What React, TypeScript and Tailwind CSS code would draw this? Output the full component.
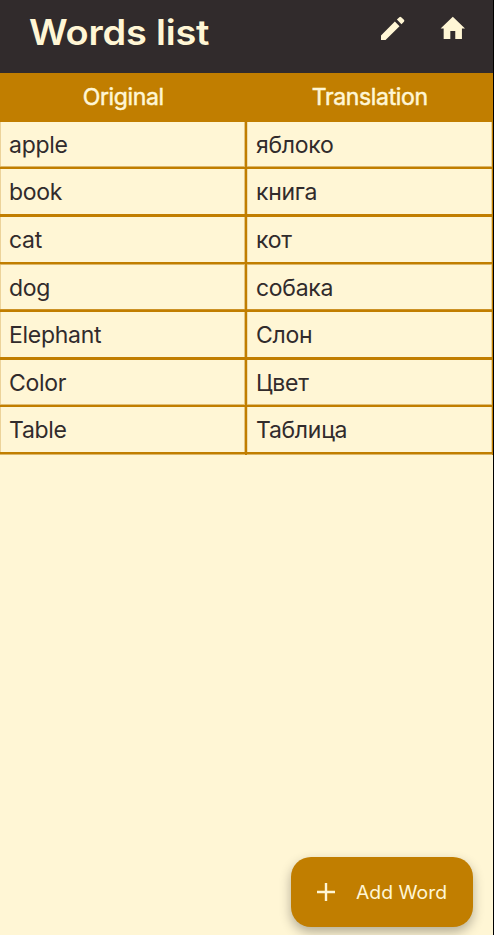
const words = [
  { original: "apple", translation: "яблоко", height: "h-[44px]", line: "border-t-[#dcb769]", end: "border-b-[#c17e00]" },
  { original: "book", translation: "книга", height: "h-[45px]", line: "border-t-[#c17e00]", end: "border-b-[#c17e00]" },
  { original: "cat", translation: "кот", height: "h-[45px]", line: "border-t-[#c17e00]", end: "border-b-[#dcb769]" },
  { original: "dog", translation: "собака", height: "h-[44px]", line: "border-t-[#cc9226]", end: "border-b-[#c17e00]" },
  { original: "Elephant", translation: "Слон", height: "h-[45px]", line: "border-t-[#c17e00]", end: "border-b-[#c17e00]" },
  { original: "Color", translation: "Цвет", height: "h-[44px]", line: "border-t-[#e0be75]", end: "border-b-[#c17e00]" },
  { original: "Table", translation: "Таблица", height: "h-[45px]", line: "border-t-[#c17e00]", end: "border-b-[#dcb769]" },
];

export default function App() {
  return (
    <div className="flex h-[935px] w-[494px] flex-col overflow-hidden border-r border-black bg-[#fff6d5] font-['Inter',sans-serif] text-[#312b2c]">
      <header className="flex h-[73px] shrink-0 items-start bg-[#312b2c] text-[#fff6d5]">
        <h1 className="ml-[29px] mt-[10px] origin-left scale-x-[1.085] whitespace-nowrap text-[35px] font-semibold leading-[44px] tracking-[-0.2px]">Words list</h1>
        <div className="ml-auto mr-[24px] mt-[12px] flex gap-[28px]">
          <svg className="size-8" viewBox="0 0 24 24" fill="currentColor">
            <path d="M3 17.6V21h3.4L16.9 10.6l-3.5-3.5L3 17.6zM20.2 7.3a1 1 0 0 0 0-1.4l-2.05-2.05a1 1 0 0 0-1.4 0L14.9 5.7l3.45 3.45 1.85-1.85z" />
          </svg>
          <svg className="size-8" viewBox="0 0 24 24" fill="currentColor">
            <path d="M10 20.3v-6.1h3.7v6.1h5v-8H21L11.85 3.6 2.7 12.3H5v8z" />
          </svg>
        </div>
      </header>
      <div className="grid h-[49px] shrink-0 grid-cols-2 bg-[#c17e00] text-center text-[23px] font-normal leading-[48px] tracking-[-0.35px] text-[#fff6d5] [-webkit-text-stroke:0.5px_#fff6d5]">
        <div>Original</div>
        <div>Translation</div>
      </div>
      {words.map((w) => (
        <div key={w.original} className="shrink-0 text-[23px] font-normal tracking-[-0.28px]">
          <div className={`flex border-l border-l-[#ecd39a] leading-[46px] ${w.height}`}>
            <div className="w-[243px] pl-[8px]">{w.original}</div>
            <div className="w-px bg-[#e4c583]" />
            <div className="w-[2px] bg-[#c17e00]" />
            <div className="w-px bg-[#f0dbaa]" />
            <div className="flex-1 pl-[8px]">{w.translation}</div>
            <div className="w-px bg-[#ecd39a]" />
            <div className="w-px bg-[#c17e00]" />
          </div>
          <div className="flex h-[3px]">
            <div className={`w-[245px] border-y bg-[#c17e00] ${w.line} ${w.end}`} />
            <div className="w-[2px] bg-[#c17e00]" />
            <div className={`flex-1 border-y bg-[#c17e00] ${w.line} ${w.end}`} />
            <div className="w-px bg-[#c17e00]" />
          </div>
        </div>
      ))}
      <button className="mb-[8px] ml-auto mr-[20px] mt-auto flex h-[70px] w-[182px] shrink-0 items-center rounded-[20px] bg-[#c17e00] pl-[26px] text-[#fff6d5] shadow-[0_5px_12px_rgba(0,0,0,0.3)]">
        <svg className="size-[18px] shrink-0" viewBox="0 0 18 18" fill="none" stroke="currentColor" strokeWidth="2.4">
          <path d="M9 0v18M0 9h18" />
        </svg>
        <span className="ml-[21px] origin-left scale-x-[1.075] whitespace-nowrap text-[18px] font-normal">Add Word</span>
      </button>
    </div>
  );
}
